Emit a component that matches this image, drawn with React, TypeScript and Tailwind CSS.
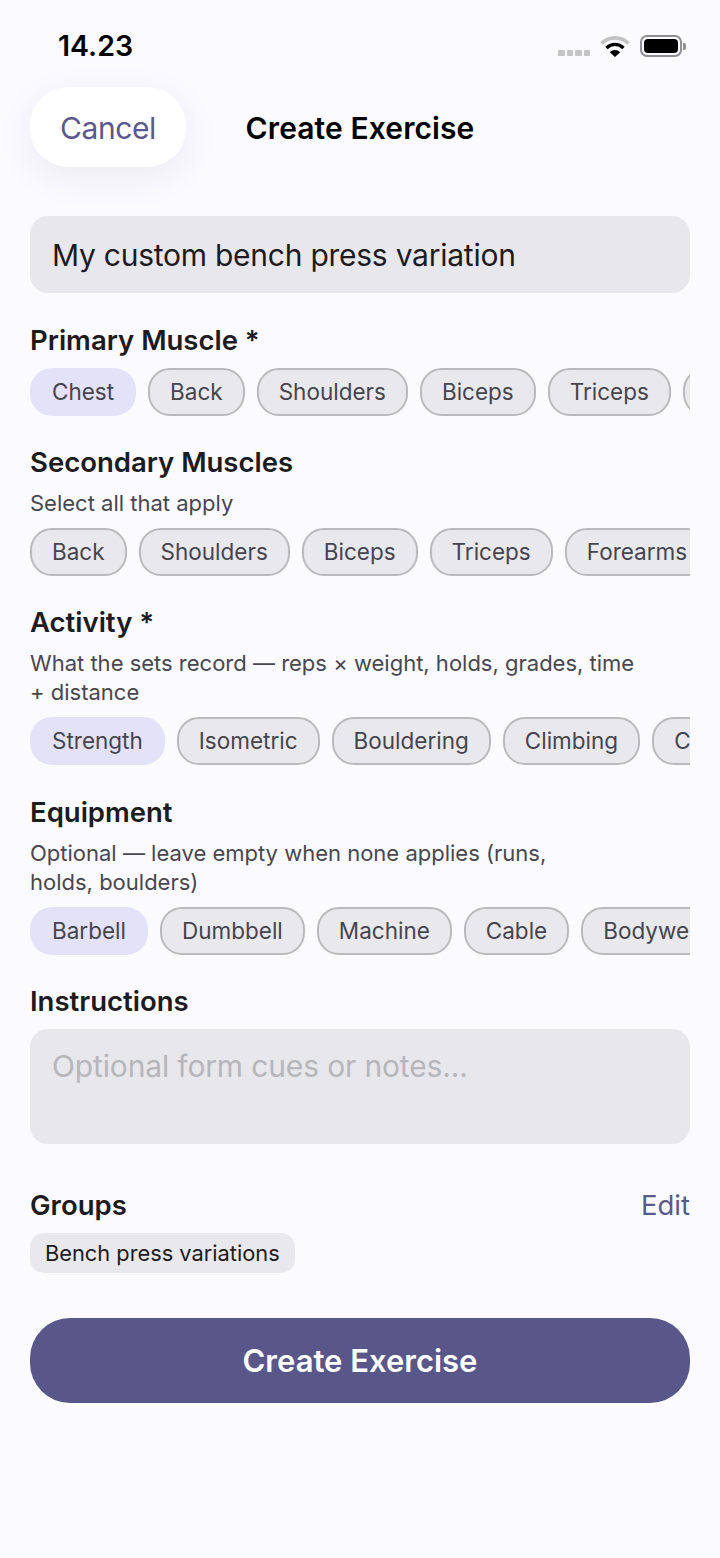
const FONT = "font-['Inter','Noto_Sans',sans-serif]";

const StatusIcons = () => (
  <div className="flex items-center">
    <div className="mt-[14px] flex gap-[2px]">
      <span className="h-[6px] w-[6.5px] rounded-[1px] bg-[#c4c4c8]" />
      <span className="h-[6px] w-[6.5px] rounded-[1px] bg-[#c4c4c8]" />
      <span className="h-[6px] w-[6.5px] rounded-[1px] bg-[#c4c4c8]" />
      <span className="h-[6px] w-[6.5px] rounded-[1px] bg-[#c4c4c8]" />
    </div>
    <svg className="ml-[10px]" width="30" height="22" viewBox="0 0 30 22">
      <path d="M1.5 8.5C9 1 21 1 28.5 8.5" fill="none" stroke="#c2c2c6" strokeWidth="3.6" />
      <path d="M6.5 13C11.5 8.2 18.5 8.2 23.5 13" fill="none" stroke="#000" strokeWidth="3.4" />
      <path d="M9.8 17.2C13 14.4 17 14.4 20.2 17.2L15 22Z" fill="#000" />
    </svg>
    <div className="ml-[10px] flex h-[22px] w-[42px] items-center justify-center rounded-[7px] border-2 border-[#8f8f93]">
      <div className="h-[14px] w-[34px] rounded-[4px] bg-black" />
    </div>
    <div className="ml-[1px] h-[7px] w-[3px] rounded-r-[2px] bg-[#8f8f93]" />
  </div>
);

const Chip = ({ label, on }: { label: string; on?: boolean }) => (
  <div
    className={
      "flex h-[48px] shrink-0 items-center rounded-[22px] text-[22.5px] text-[#45444f] " +
      (on ? "bg-[#e3e2f8] px-[22px]" : "border-2 border-[#b9b9be] bg-[#e9e8ed] px-[20px]")
    }
  >
    {label}
  </div>
);

const ChipRow = ({ items, selected }: { items: string[]; selected?: string }) => (
  <div className="flex gap-[12px] overflow-hidden">
    {items.map((item) => (
      <Chip key={item} label={item} on={item === selected} />
    ))}
  </div>
);

const Heading = ({ children }: { children: React.ReactNode }) => (
  <h2 className="h-[34px] text-[27.5px] leading-[34px] font-semibold text-[#1c1b20]">{children}</h2>
);

const Sub = ({ children }: { children: React.ReactNode }) => (
  <p className="mt-[10px] mb-[10px] text-[22px] leading-[29px] text-[#48474f]">{children}</p>
);

export default function App() {
  return (
    <div className={FONT + " h-[1558px] w-[720px] overflow-hidden bg-[#fbfaff]"}>
      <div className="flex h-[87px] items-center justify-between pr-[34px] pl-[58px]">
        <span className="mt-[5px] text-[28.5px] font-semibold text-black">14.23</span>
        <div className="mt-[5px]">
          <StatusIcons />
        </div>
      </div>

      <div className="px-[30px]">
        <div className="relative flex h-[80px] items-center justify-center pt-[2px]">
          <div className="absolute top-0 left-0 flex h-[80px] w-[156px] items-center justify-center rounded-[38px] bg-white pt-[2px] text-[30px] tracking-[-0.4px] text-[#5a588c] shadow-[0_10px_36px_rgba(40,40,70,0.07)]">
            Cancel
          </div>
          <span className="text-[30px] tracking-[0.1px] font-semibold text-black">Create Exercise</span>
        </div>

        <div className="mt-[49px] flex h-[77px] items-center rounded-[18px] bg-[#e8e7ec] px-[22px] pt-[2px] text-[30px] tracking-[-0.25px] text-[#1c1b20]">
          My custom bench press variation
        </div>

        <div className="mt-[30px]">
          <Heading>Primary Muscle *</Heading>
          <div className="mt-[11px]">
            <ChipRow
              items={["Chest", "Back", "Shoulders", "Biceps", "Triceps", "Forearms"]}
              selected="Chest"
            />
          </div>
        </div>

        <div className="mt-[29px]">
          <Heading>Secondary Muscles</Heading>
          <Sub>Select all that apply</Sub>
          <ChipRow items={["Back", "Shoulders", "Biceps", "Triceps", "Forearms"]} />
        </div>

        <div className="mt-[29px]">
          <Heading>Activity *</Heading>
          <Sub>
            What the sets record — reps × weight, holds, grades, time
            <br />+ distance
          </Sub>
          <ChipRow
            items={["Strength", "Isometric", "Bouldering", "Climbing", "Cardio"]}
            selected="Strength"
          />
        </div>

        <div className="mt-[30px]">
          <Heading>Equipment</Heading>
          <Sub>
            Optional — leave empty when none applies (runs,
            <br />
            holds, boulders)
          </Sub>
          <ChipRow
            items={["Barbell", "Dumbbell", "Machine", "Cable", "Bodyweight"]}
            selected="Barbell"
          />
        </div>

        <div className="mt-[29px]">
          <Heading>Instructions</Heading>
          <div className="mt-[11px] h-[115px] rounded-[18px] bg-[#e8e7ec] px-[22px] pt-[18px] text-[30px] leading-[39px] tracking-[-0.15px] text-[#b6b6bb]">
            Optional form cues or notes...
          </div>
        </div>

        <div className="mt-[44px]">
          <div className="flex h-[34px] items-center justify-between">
            <Heading>Groups</Heading>
            <span className="text-[27.5px] leading-[34px] text-[#5a588c]">Edit</span>
          </div>
          <div className="mt-[11px] flex h-[40px] w-fit items-center rounded-[14px] bg-[#e9e8ed] px-[15px] text-[21.8px] text-[#1c1b20]">
            Bench press variations
          </div>
        </div>

        <div className="mt-[45px] flex h-[85px] items-center justify-center rounded-[40px] bg-[#59578a] pt-[2px] text-[31px] font-semibold text-white">
          Create Exercise
        </div>
      </div>
    </div>
  );
}
